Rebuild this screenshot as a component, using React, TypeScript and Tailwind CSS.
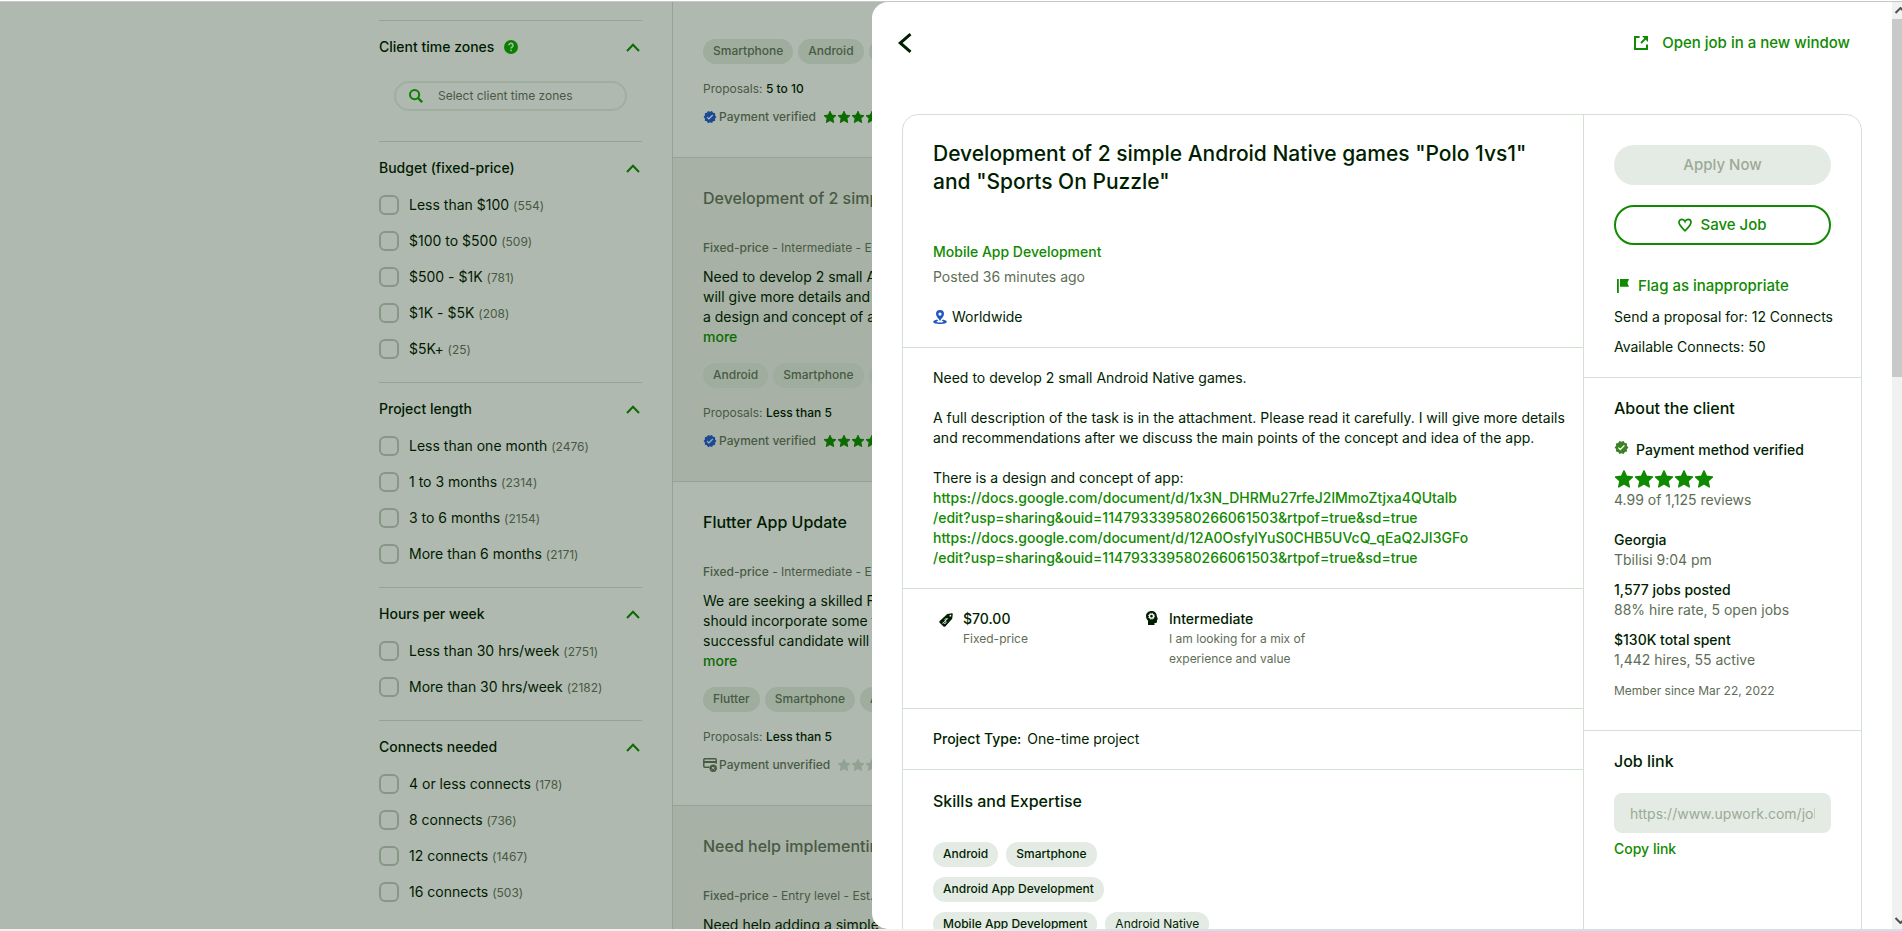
import type { ReactNode } from "react";
import { MdVerified } from "react-icons/md";

/* ---------- icons ---------- */

function Star({ className }: { className: string }) {
  return (
    <svg viewBox="0 0 20 20" className={className} fill="currentColor" aria-hidden="true">
      <path
        d="M10 1.8l2.5 5.5 6 .7-4.4 4.1 1.2 5.9-5.3-3-5.3 3 1.2-5.9L1.500 8l6-.7z"
        stroke="currentColor"
        strokeWidth="1.4"
        strokeLinejoin="round"
      />
    </svg>
  );
}

function Stars({ size, color }: { size: string; color: string }) {
  return (
    <span className={`flex ${color}`}>
      {[0, 1, 2, 3, 4].map((i) => (
        <Star key={i} className={size} />
      ))}
    </span>
  );
}

function ChevronUp() {
  return (
    <svg viewBox="0 0 14 9" className="h-[9px] w-[14px] text-[#0b6b00]" aria-hidden="true">
      <path d="M1 8l6-6.200L13 8" fill="none" stroke="currentColor" strokeWidth="2" />
    </svg>
  );
}

function HelpIcon() {
  return (
    <svg viewBox="0 0 14 14" className="size-[14px]" aria-hidden="true">
      <circle cx="7" cy="7" r="7" fill="#0b8000" />
      <path d="M5 5.400a2 2 0 1 1 3.200 1.500C7.400 7.500 7 7.700 7 8.500" fill="none" stroke="#b0b9b0" strokeWidth="1.500" />
      <rect x="6.200" y="9.600" width="1.600" height="1.600" fill="#b0b9b0" />
    </svg>
  );
}

function SearchIcon() {
  return (
    <svg viewBox="0 0 14 14" className="size-[14px] shrink-0" fill="none" stroke="#0b8000" aria-hidden="true">
      <circle cx="5.600" cy="5.600" r="4.600" strokeWidth="2" />
      <path d="M9 9l4.200 4.200" strokeWidth="2.400" />
    </svg>
  );
}

function CardOffIcon() {
  return (
    <svg viewBox="0 0 14 14" className="size-[14px]" aria-hidden="true">
      <path d="M6.500 9.300H1.700A1 1 0 0 1 .8 8.400V1.700a1 1 0 0 1 .9-.9h10.600a1 1 0 0 1 .9.900v4" fill="none" stroke="#475a43" strokeWidth="1.500" />
      <path d="M.8 4h12.400" stroke="#475a43" strokeWidth="2" />
      <circle cx="10.200" cy="10.200" r="3.700" fill="#475a43" />
      <path d="M8.900 8.900l2.600 2.600m0-2.600l-2.600 2.600" stroke="#b0b9b0" strokeWidth="1" />
    </svg>
  );
}

function OpenIcon() {
  return (
    <svg viewBox="0 0 14 14" className="size-[14px]" fill="none" stroke="currentColor" aria-hidden="true">
      <path d="M5.600 1H1v12h12V8.400" strokeWidth="2" />
      <path d="M7 7l4.500-4.500" strokeWidth="1.800" />
      <path d="M8 0h6v6z" fill="currentColor" stroke="none" />
    </svg>
  );
}

function HeartIcon() {
  return (
    <svg viewBox="0 0 14 14" className="size-[14px]" fill="none" stroke="currentColor" aria-hidden="true">
      <path
        d="M7 12.700C4.500 10.200 1 7.400 1 4.300 1 2.500 2.400 1.300 3.900 1.300c1.300 0 2.500.8 3.100 2.200.6-1.400 1.800-2.200 3.100-2.200 1.500 0 2.900 1.200 2.900 3 0 3.100-3.500 5.900-6 8.400z"
        strokeWidth="1.700"
      />
    </svg>
  );
}

function FlagIcon() {
  return (
    <svg viewBox="0 0 14 14" className="size-[14px]" fill="currentColor" aria-hidden="true">
      <path d="M1 0h1.800v14H1zM4 0h9l-1.600 3.900L13 7.800H4z" />
    </svg>
  );
}

function PinIcon() {
  return (
    <svg viewBox="0 0 14 14" className="size-[14px]" aria-hidden="true">
      <path d="M4.200 9.400C1.800 9.800.2 10.700.2 11.700.2 13 3.200 14 7 14s6.800-1 6.800-2.300c0-1-1.600-1.900-4-2.300L8.700 11c1 .1 1.800.4 1.800.7 0 .4-1.500.8-3.500.8s-3.500-.4-3.500-.8c0-.3.800-.6 1.800-.7z" fill="#1f57c3" />
      <path d="M7 0a4 4 0 0 0-4 4c0 2.500 2.500 4.300 4 7 1.500-2.700 4-4.500 4-7a4 4 0 0 0-4-4zm0 2.500a1.600 1.600 0 1 1 0 3.200 1.600 1.600 0 0 1 0-3.200z" fill="#1f57c3" fillRule="evenodd" />
    </svg>
  );
}

function TagIcon() {
  return (
    <svg viewBox="0 0 14 14" className="mt-1 size-[14px] shrink-0" aria-hidden="true">
      <path d="M8.300 1L13 .200q.8 0 .8.800L13.200 5.800 6.300 13.400q-.9.900-1.800 0L.7 9.700q-.9-.9 0-1.800z" fill="#001e00" />
      <circle cx="11.400" cy="2.700" r="0.900" fill="#fff" />
      <path d="M8.300 6.200C7 4.800 5.500 6.100 6.200 7.300s1.400 2.500.1 3.100c-.9.300-1.700-.2-2-.9M8.700 5.400l-5 5.200" fill="none" stroke="#fff" strokeWidth="0.900" />
    </svg>
  );
}

function HeadIcon() {
  return (
    <svg viewBox="0 0 14 14" className="mt-0.5 size-[14px] shrink-0" aria-hidden="true">
      <path d="M6.500 0C3.200 0 1 2.200 1 5.200c0 2 .9 3.300 2 4.200V14h6.500v-2h1.300c.7 0 1.200-.5 1.200-1.200V8.600h1L11.800 5C11.700 2 9.600 0 6.500 0z" fill="#001e00" />
      <circle cx="6.500" cy="5.200" r="2" fill="none" stroke="#fff" strokeWidth="1.300" />
      <circle cx="6.500" cy="5.200" r="3" fill="none" stroke="#fff" strokeWidth="0.900" strokeDasharray="1.200 1.150" />
    </svg>
  );
}

/* ---------- filters ---------- */

type Option = [label: string, count: string];

const filters: { title: string; options: Option[] }[] = [
  {
    title: "Budget (fixed-price)",
    options: [
      ["Less than $100", "554"],
      ["$100 to $500", "509"],
      ["$500 - $1K", "781"],
      ["$1K - $5K", "208"],
      ["$5K+", "25"],
    ],
  },
  {
    title: "Project length",
    options: [
      ["Less than one month", "2476"],
      ["1 to 3 months", "2314"],
      ["3 to 6 months", "2154"],
      ["More than 6 months", "2171"],
    ],
  },
  {
    title: "Hours per week",
    options: [
      ["Less than 30 hrs/week", "2751"],
      ["More than 30 hrs/week", "2182"],
    ],
  },
  {
    title: "Connects needed",
    options: [
      ["4 or less connects", "178"],
      ["8 connects", "736"],
      ["12 connects", "1467"],
      ["16 connects", "503"],
    ],
  },
];

function FilterHeading({ children }: { children: ReactNode }) {
  return (
    <button type="button" className="flex h-7 w-full items-center justify-between pr-0.5 text-left font-medium">
      <span className="flex items-center gap-2.5">{children}</span>
      <ChevronUp />
    </button>
  );
}

function Filters() {
  return (
    <aside className="w-[673px] shrink-0 border-r border-[#93a493] pt-[18px] pr-[30px] pl-[379px]">
      <section className="border-t border-[#93a493] pt-3 pb-[30px]">
        <FilterHeading>
          Client time zones <HelpIcon />
        </FilterHeading>
        <label className="mx-[15px] mt-5 flex h-[30px] items-center gap-[15px] rounded-full border-2 border-[#a0aea0] px-[13px]">
          <SearchIcon />
          <input
            type="text"
            aria-label="Select client time zones"
            placeholder="Select client time zones"
            className="w-full min-w-0 bg-transparent text-xs text-[#475a43] outline-none placeholder:text-[#475a43]"
          />
        </label>
      </section>
      {filters.map((f) => (
        <section key={f.title} className="border-t border-[#93a493] pt-3 pb-[15px]">
          <FilterHeading>{f.title}</FilterHeading>
          <div className="mt-[5px]">
            {f.options.map(([label, count]) => (
              <label key={label} className="flex h-9 items-center gap-2.5">
                <input type="checkbox" className="size-5 shrink-0 appearance-none rounded-[6px] border-2 border-[#869786]" />
                <span>
                  {label} <span className="text-xs text-[#475a43]">({count})</span>
                </span>
              </label>
            ))}
          </div>
        </section>
      ))}
    </aside>
  );
}

/* ---------- job feed ---------- */

interface Job {
  title?: string;
  level?: string;
  lines?: string[];
  tags: string[];
  proposals: string;
  verified: boolean;
  viewed: boolean;
}

const jobs: Job[] = [
  { tags: ["Smartphone", "Android", "Mobile App"], proposals: "5 to 10", verified: true, viewed: false },
  {
    title: "Development of 2 simple Android",
    level: "Intermediate - Est.",
    lines: ["Need to develop 2 small Android", "will give more details and rec", "a design and concept of app:"],
    tags: ["Android", "Smartphone", "Mobile App"],
    proposals: "Less than 5",
    verified: true,
    viewed: true,
  },
  {
    title: "Flutter App Update",
    level: "Intermediate - Est.",
    lines: ["We are seeking a skilled Flutter", "should incorporate some features", "successful candidate will have"],
    tags: ["Flutter", "Smartphone", "Android"],
    proposals: "Less than 5",
    verified: false,
    viewed: false,
  },
  {
    title: "Need help implementing",
    level: "Entry level - Est.",
    lines: ["Need help adding a simple feature"],
    tags: [],
    proposals: "Less than 5",
    verified: true,
    viewed: true,
  },
];

function JobCard({ job }: { job: Job }) {
  return (
    <article
      className={`border-b border-[#93a493] pb-[30px] pl-[30px] whitespace-nowrap ${job.viewed ? "bg-[#a7b1a6]" : ""} ${
        job.title ? "pt-7" : "pt-[21px]"
      }`}
    >
      {job.title && (
        <>
          <h3 className={`text-base leading-6 font-medium ${job.viewed ? "text-[#475a43]" : ""}`}>{job.title}</h3>
          <p className="mt-7 text-xs leading-5 text-[#475a43]">
            <span className="font-medium">Fixed-price</span> - {job.level}
          </p>
          <p className="mt-[9px] leading-5">
            {job.lines?.map((l) => (
              <span key={l} className="block">
                {l}
              </span>
            ))}
            <a href="#more" className="font-medium text-[#0c6b00]">
              more
            </a>
          </p>
        </>
      )}
      <div className="mt-4 flex gap-[5px]">
        {job.tags.map((t) => (
          <span key={t} className="h-[25px] rounded-full bg-[#9fad9f] px-2.5 text-xs leading-6 font-medium text-[#475a43]">
            {t}
          </span>
        ))}
      </div>
      <p className="mt-[15px] text-xs leading-5 text-[#475a43]">
        Proposals: <span className="font-medium text-[#001c00]">{job.proposals}</span>
      </p>
      <div className="mt-2 flex h-5 items-center text-xs font-medium text-[#475a43]">
        {job.verified ? <MdVerified className="size-[14px] text-[#1a4a94]" /> : <CardOffIcon />}
        <span className="ml-0.5">{job.verified ? "Payment verified" : "Payment unverified"}</span>
        <span className="ml-[7px]">
          <Stars size="size-[14px]" color={job.verified ? "text-[#0b6b00]" : "text-[#91a292]"} />
        </span>
      </div>
    </article>
  );
}

/* ---------- job details ---------- */

const docs = [
  ["https://docs.google.com/document/d/1x3N_DHRMu27rfeJ2lMmoZtjxa4QUtalb", "/edit?usp=sharing&ouid=114793339580266061503&rtpof=true&sd=true"],
  ["https://docs.google.com/document/d/12A0OsfylYuS0CHB5UVcQ_qEaQ2JI3GFo", "/edit?usp=sharing&ouid=114793339580266061503&rtpof=true&sd=true"],
];

function Skill({ children, plain = false }: { children: ReactNode; plain?: boolean }) {
  return (
    <li className={`h-[25px] rounded-xl bg-[#e4ebe4] px-2.5 text-xs leading-6 ${plain ? "" : "font-medium"}`}>{children}</li>
  );
}

function Details() {
  return (
    <div className="min-w-0 flex-1">
      <section className="px-[30px] pt-[25px] pb-5">
        <h1 className="text-[21px] leading-7 font-medium">
          Development of 2 simple Android Native games "Polo 1vs1" and "Sports On Puzzle"
        </h1>
        <a href="#category" className="mt-[46px] block leading-5 font-medium text-[#108a00]">
          Mobile App Development
        </a>
        <p className="mt-[5px] leading-5 text-[#5e6d55]">Posted 36 minutes ago</p>
        <p className="mt-5 flex items-center gap-[5px] leading-5">
          <PinIcon /> Worldwide
        </p>
      </section>
      <section className="border-t border-[#d5e0d5] py-5 pr-4 pl-[30px] leading-5">
        <p>Need to develop 2 small Android Native games.</p>
        <p className="mt-5">
          A full description of the task is in the attachment. Please read it carefully. I will give more details
          <br />
          and recommendations after we discuss the main points of the concept and idea of the app.
        </p>
        <p className="mt-5">There is a design and concept of app:</p>
        {docs.map(([a, b]) => (
          <a key={a} href="#doc" className="block font-medium text-[#108a00]">
            {a}
            <br />
            {b}
          </a>
        ))}
      </section>
      <section className="flex border-t border-[#d5e0d5] px-[30px] pt-5 pb-[39px]">
        <div className="flex w-[206px] gap-2.5 pl-1.5">
          <TagIcon />
          <div>
            <p className="leading-5 font-medium">$70.00</p>
            <p className="text-xs leading-5 text-[#5e6d55]">Fixed-price</p>
          </div>
        </div>
        <div className="flex w-[206px] gap-2.5 pl-1.5">
          <HeadIcon />
          <div>
            <p className="leading-5 font-medium">Intermediate</p>
            <p className="w-36 text-xs leading-5 text-[#5e6d55]">I am looking for a mix of experience and value</p>
          </div>
        </div>
      </section>
      <section className="border-t border-[#d5e0d5] px-[30px] py-5 leading-5">
        <span className="mr-1.5 font-medium">Project Type:</span>
        One-time project
      </section>
      <section className="border-t border-[#d5e0d5] px-[30px] pt-[19px]">
        <h2 className="text-base leading-6 font-medium">Skills and Expertise</h2>
        <ul className="mt-[29px] flex gap-2">
          <Skill>Android</Skill>
          <Skill>Smartphone</Skill>
        </ul>
        <ul className="mt-2.5 flex gap-2">
          <Skill>Android App Development</Skill>
        </ul>
        <ul className="mt-2.5 flex gap-2">
          <Skill>Mobile App Development</Skill>
          <Skill plain>Android Native</Skill>
        </ul>
      </section>
    </div>
  );
}

function Fact({ title, note }: { title: string; note: string }) {
  return (
    <div className="leading-5">
      <p className="font-medium">{title}</p>
      <p className="text-[#5e6d55]">{note}</p>
    </div>
  );
}

function ClientInfo() {
  return (
    <aside className="w-[278px] shrink-0 border-l border-[#d5e0d5]">
      <section className="px-[30px] pt-[30px] pb-5 leading-5 whitespace-nowrap">
        <button type="button" disabled className="h-10 w-full rounded-full bg-[#e4ebe4] text-[15px] font-medium text-[#9aaa97]">
          Apply Now
        </button>
        <button
          type="button"
          className="mt-5 flex h-10 w-full items-center justify-center gap-2 rounded-full border-2 border-[#108a00] text-[15px] font-medium text-[#108a00]"
        >
          <HeartIcon /> Save Job
        </button>
        <a href="#flag" className="mt-[31px] flex items-center gap-2 pl-0.5 text-[15px] leading-5 font-medium text-[#108a00]">
          <FlagIcon /> Flag as inappropriate
        </a>
        <p className="mt-[11px]">Send a proposal for: 12 Connects</p>
        <p className="mt-2.5">Available Connects: 50</p>
      </section>
      <section className="border-t border-[#d5e0d5] px-[30px] pt-[18px] pb-[29px]">
        <h2 className="text-base leading-6 font-medium">About the client</h2>
        <p className="mt-5 flex gap-[7px] leading-5 font-medium">
          <MdVerified className="size-[15px] text-[#3c8224]" /> Payment method verified
        </p>
        <div className="mt-[9px] h-[21px]">
          <Stars size="size-5" color="text-[#108a00]" />
        </div>
        <p className="leading-5 text-[#5e6d55]">4.99 of 1,125 reviews</p>
        <div className="mt-5 flex flex-col gap-2.5">
          <Fact title="Georgia" note="Tbilisi 9:04 pm" />
          <Fact title="1,577 jobs posted" note="88% hire rate, 5 open jobs" />
          <Fact title="$130K total spent" note="1,442 hires, 55 active" />
        </div>
        <p className="mt-[11px] text-xs leading-5 text-[#5e6d55]">Member since Mar 22, 2022</p>
      </section>
      <section className="border-t border-[#d5e0d5] px-[30px] pt-[18px]">
        <h2 className="text-base leading-6 font-medium">Job link</h2>
        <input
          type="text"
          aria-label="Job link"
          disabled
          defaultValue="https://www.upwork.com/jobs/"
          className="mt-5 block h-10 w-full rounded-lg bg-[#e4ebe4] px-4 text-[#9aaa97]"
        />
        <button type="button" className="mt-1.5 block leading-5 font-medium text-[#108a00]">
          Copy link
        </button>
      </section>
    </aside>
  );
}

function Scrollbar() {
  return (
    <div className="flex w-2.5 shrink-0 flex-col bg-[#f1f1f1]" aria-hidden="true">
      <div className="flex h-[17px] items-center justify-end">
        <svg viewBox="0 0 7 7" className="size-[7px]" fill="none" stroke="#505050" strokeWidth="2">
          <path d="M.5 6l5-5 5 5" />
        </svg>
      </div>
      <div className="h-[358px] bg-[#c9c9c9]" />
      <div className="mt-auto flex h-[17px] items-center justify-end">
        <svg viewBox="0 0 7 7" className="size-[7px]" fill="none" stroke="#505050" strokeWidth="2">
          <path d="M.5 1l5 5 5-5" />
        </svg>
      </div>
    </div>
  );
}

export default function App() {
  return (
    <div className="flex h-screen flex-col overflow-hidden font-['Inter','Liberation_Sans',sans-serif] text-sm text-[#001e00] [font-feature-settings:'calt'_0]">
      <div className="h-0.5 shrink-0 border-b border-[#c4c8c4] bg-white" />
      <div className="relative min-h-0 flex-1 overflow-hidden bg-[#b0b9b0]">
        <div className="flex text-[#001c00]">
          <Filters />
          <main className="min-w-0 flex-1 overflow-hidden">
            {jobs.map((job, i) => (
              <JobCard key={i} job={job} />
            ))}
          </main>
        </div>
        <div role="dialog" aria-label="Job details" className="absolute inset-y-0 right-0 left-[872px] flex overflow-hidden rounded-l-2xl bg-white">
          <div className="min-w-0 flex-1 overflow-hidden px-[30px]">
            <header className="flex h-[112px] items-start justify-between pt-[29px] pr-3">
              <button type="button" aria-label="Back" className="-ml-1 flex h-6 items-center">
                <svg viewBox="0 0 14 20" className="h-5 w-[14px]" fill="none" stroke="#001e00" strokeWidth="3">
                  <path d="M12.500 1.200L2.200 10l10.300 8.800" />
                </svg>
              </button>
              <a href="#open" className="flex h-6 items-center gap-[14px] text-[15px] font-medium text-[#108a00]">
                <OpenIcon /> Open job in a new window
              </a>
            </header>
            <div className="flex min-h-[900px] rounded-t-2xl border border-[#d5e0d5]">
              <Details />
              <ClientInfo />
            </div>
          </div>
          <Scrollbar />
        </div>
      </div>
      <div className="h-0.5 shrink-0 bg-linear-to-r from-[#f0f0f0] from-50% to-[#d3dfea] to-60%" />
    </div>
  );
}
